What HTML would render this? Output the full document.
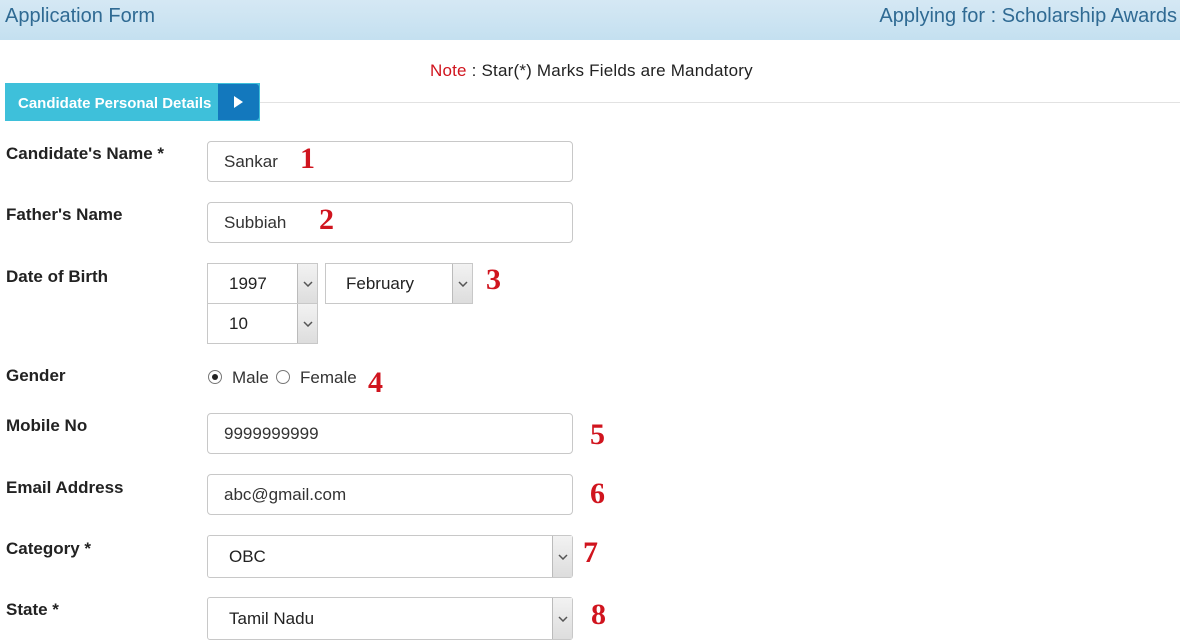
<!DOCTYPE html>
<html><head><style>
*{margin:0;padding:0;box-sizing:border-box}
body{width:1180px;height:640px;background:#fff;font-family:"Liberation Sans",sans-serif;position:relative;overflow:hidden}
.a{position:absolute}
.hdr{left:0;top:0;width:1180px;height:40px;background:linear-gradient(#d5e8f4,#c4e0f0);color:#2f6a93;font-size:20px}
.lbl{left:6px;font-weight:bold;font-size:17px;color:#222}
.inp{left:207px;width:366px;height:41px;border:1px solid #c8c8c8;border-radius:4px;font-size:17px;color:#333;padding:10px 0 0 16px}
.sel{border:1px solid #c8c8c8;font-size:17px;color:#222;background:#fff}
.arr{position:absolute;right:0;top:0;bottom:0;width:20px;background:linear-gradient(#f2f2f2,#ddd);border-left:1px solid #bbb}
.arr svg{position:absolute;left:5px;top:50%;margin-top:-3px}
.num{font-family:"Liberation Serif",serif;font-weight:bold;color:#d0141e;font-size:30px}
.rad{width:14px;height:14px;border:1px solid #777;border-radius:50%}
</style></head><body>
<div class="a hdr"><span class="a" style="left:5px;top:5px">Application Form</span><span class="a" style="right:3px;top:5px">Applying for : Scholarship Awards</span></div>
<div class="a" style="left:430px;top:61px;font-size:17px;color:#222;letter-spacing:0.2px"><span style="color:#d0141e">Note</span> : Star(*) Marks Fields are Mandatory</div>
<div class="a" style="left:260px;top:102px;width:920px;height:1px;background:#e2e2e2"></div>
<div class="a" style="left:5px;top:83px;width:255px;height:38px;background:#3ec0da"></div>
<div class="a" style="left:18px;top:95px;color:#fff;font-weight:bold;font-size:15px">Candidate Personal Details</div>
<div class="a" style="left:218px;top:84px;width:41px;height:36px;background:#1378bd;border-radius:0 3px 3px 0"><svg class="a" style="left:15px;top:11px" width="12" height="14"><path d="M1 1L10 7L1 13Z" fill="#fff"/></svg></div>

<div class="a lbl" style="top:144px">Candidate's Name *</div>
<div class="a inp" style="top:141px">Sankar</div><div class="a num" style="left:300px;top:142px">1</div>
<div class="a lbl" style="top:205px">Father's Name</div>
<div class="a inp" style="top:202px">Subbiah</div><div class="a num" style="left:319px;top:203px">2</div>
<div class="a lbl" style="top:267px">Date of Birth</div>
<div class="a sel" style="left:207px;top:263px;width:111px;height:41px;padding:10px 0 0 21px">1997<div class="arr"><svg width="10" height="6"><path d="M1 1L5 5L9 1" stroke="#555" stroke-width="1.5" fill="none"/></svg></div></div>
<div class="a sel" style="left:325px;top:263px;width:148px;height:41px;padding:10px 0 0 20px">February<div class="arr"><svg width="10" height="6"><path d="M1 1L5 5L9 1" stroke="#555" stroke-width="1.5" fill="none"/></svg></div></div>
<div class="a num" style="left:486px;top:263px">3</div>
<div class="a sel" style="left:207px;top:303px;width:111px;height:41px;padding:10px 0 0 21px">10<div class="arr"><svg width="10" height="6"><path d="M1 1L5 5L9 1" stroke="#555" stroke-width="1.5" fill="none"/></svg></div></div>
<div class="a lbl" style="top:366px">Gender</div>
<div class="a rad" style="left:208px;top:370px"><div class="a" style="left:3px;top:3px;width:6px;height:6px;border-radius:50%;background:#222"></div></div>
<div class="a" style="left:232px;top:368px;font-size:17px;color:#333">Male</div>
<div class="a rad" style="left:276px;top:370px"></div>
<div class="a" style="left:300px;top:368px;font-size:17px;color:#333">Female</div>
<div class="a num" style="left:368px;top:366px">4</div>
<div class="a lbl" style="top:416px">Mobile No</div>
<div class="a inp" style="top:413px">9999999999</div><div class="a num" style="left:590px;top:418px">5</div>
<div class="a lbl" style="top:478px">Email Address</div>
<div class="a inp" style="top:474px">abc@gmail.com</div><div class="a num" style="left:590px;top:477px">6</div>
<div class="a lbl" style="top:539px">Category *</div>
<div class="a sel" style="left:207px;top:535px;width:366px;height:43px;border-radius:3px;padding:11px 0 0 21px">OBC<div class="arr"><svg width="10" height="6"><path d="M1 1L5 5L9 1" stroke="#555" stroke-width="1.5" fill="none"/></svg></div></div>
<div class="a num" style="left:583px;top:536px">7</div>
<div class="a lbl" style="top:600px">State *</div>
<div class="a sel" style="left:207px;top:597px;width:366px;height:43px;border-radius:3px;padding:11px 0 0 21px">Tamil Nadu<div class="arr"><svg width="10" height="6"><path d="M1 1L5 5L9 1" stroke="#555" stroke-width="1.5" fill="none"/></svg></div></div>
<div class="a num" style="left:591px;top:598px">8</div>
</body></html>
